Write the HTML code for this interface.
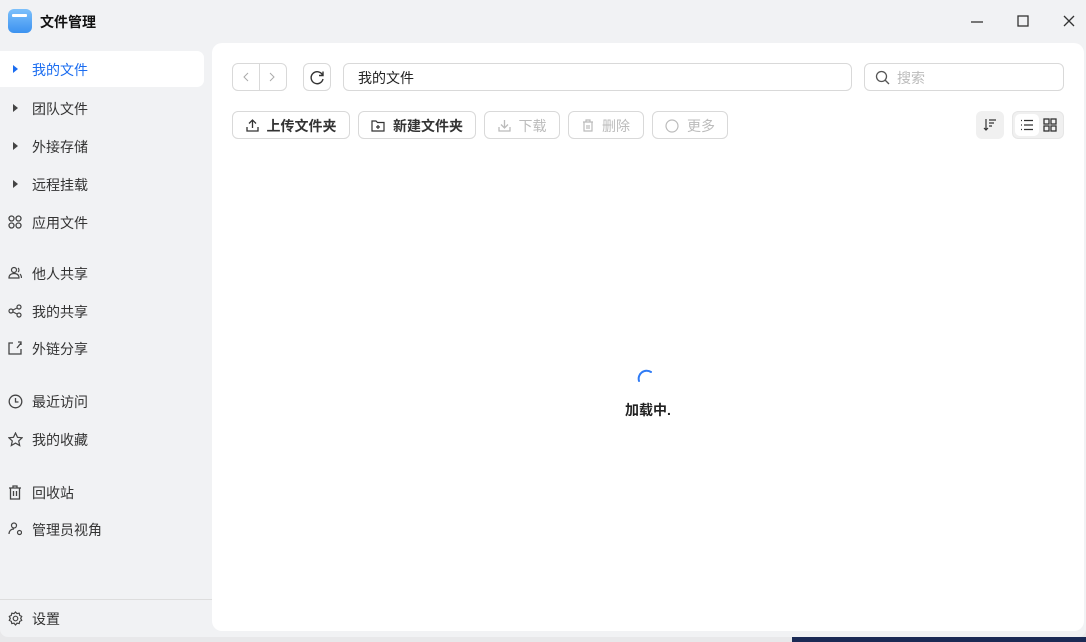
<!DOCTYPE html>
<html><head><meta charset="utf-8"><style>
*{box-sizing:border-box;margin:0;padding:0}
body{width:1086px;height:642px;overflow:hidden;background:#e8e8ea;font-family:"Liberation Sans","Noto Sans CJK SC",sans-serif;position:relative}
.win{position:absolute;left:0;top:0;width:1086px;height:637px;background:#f1f2f4;border-radius:0 0 8px 8px}
.title{position:absolute;left:40px;top:12px;font-size:14px;font-weight:bold;color:#111}
.logo{position:absolute;left:8px;top:9px;width:24px;height:24px;border-radius:6px;background:linear-gradient(#7cc0fb,#3c92f0)}
.logo:after{content:"";position:absolute;left:4px;top:5px;width:15px;height:3px;background:#fff;border-radius:1px}
.wc{position:absolute;top:12px;font-size:14px;color:#333}
.item{position:absolute;left:0;width:204px;height:36px;font-size:14px;color:#333;display:flex;align-items:center;padding-left:32px;padding-top:2px}
.item.act{background:#fff;border-radius:0 7px 7px 0;color:#1a6cf0}
.item svg{position:absolute;left:8px;top:11px}
.tri{position:absolute;left:13px;top:14px;width:0;height:0;border-left:5px solid #444;border-top:4px solid transparent;border-bottom:4px solid transparent}
.main{position:absolute;left:212px;top:43px;width:872px;height:588px;background:#fff;border-radius:10px}
.bx{position:absolute;border:1px solid #d9d9d9;border-radius:6px;background:#fff}
.btn{position:absolute;top:68px;height:28px;border:1px solid #d9d9d9;border-radius:6px;font-size:14px;font-weight:bold;color:#333;display:flex;align-items:center;justify-content:center;gap:8px;padding-top:1px}
.btn.dis{color:#bbb;font-weight:normal}
</style></head><body>
<div class="win">
<div class="logo"></div>
<div class="title">文件管理</div>
<svg class="wc" style="left:970px;top:15px" width="14" height="14"><path d="M1 7h12" stroke="#333" stroke-width="1.3"/></svg>
<svg class="wc" style="left:1017px;top:15px" width="12" height="12"><rect x="1" y="1" width="10" height="10" fill="none" stroke="#333" stroke-width="1.3"/></svg>
<svg class="wc" style="left:1063px;top:15px" width="12" height="12"><path d="M1 1l10 10M11 1L1 11" stroke="#333" stroke-width="1.3"/></svg>

<div class="item act" style="top:51px"><span class="tri" style="border-left-color:#1a6cf0"></span>我的文件</div>
<div class="item" style="top:90px"><span class="tri"></span>团队文件</div>
<div class="item" style="top:128px"><span class="tri"></span>外接存储</div>
<div class="item" style="top:166px"><span class="tri"></span>远程挂载</div>
<div class="item" style="top:204px"><svg width="14" height="14" fill="none" stroke="#444" stroke-width="1.3"><circle cx="3.5" cy="3.5" r="2.5"/><circle cx="10.5" cy="3.5" r="2.5"/><circle cx="3.5" cy="10.5" r="2.5"/><circle cx="10.5" cy="10.5" r="2.5"/></svg>应用文件</div>
<div class="item" style="top:255px"><svg width="14" height="14" fill="none" stroke="#444" stroke-width="1.2"><circle cx="6" cy="4" r="2.5"/><path d="M1 12c0-3 2-4.5 5-4.5s5 1.5 5 4.5zM10 2a2.5 2.5 0 010 4M12 8c1 1 1.5 2 1.5 4"/></svg>他人共享</div>
<div class="item" style="top:293px"><svg width="14" height="14" fill="none" stroke="#444" stroke-width="1.2"><circle cx="3" cy="7" r="2"/><circle cx="11" cy="3" r="2"/><circle cx="11" cy="11" r="2"/><path d="M5 6l4-2M5 8l4 2"/></svg>我的共享</div>
<div class="item" style="top:330px"><svg width="14" height="14" fill="none" stroke="#444" stroke-width="1.3"><path d="M5 2H1v11h12V8M9 7l4-5M10 1h3v3"/></svg>外链分享</div>
<div class="item" style="top:383px"><svg width="15" height="15" fill="none" stroke="#444" stroke-width="1.3"><circle cx="7.5" cy="7.5" r="6.3"/><path d="M7.5 4v4h3"/></svg>最近访问</div>
<div class="item" style="top:421px"><svg width="15" height="15" fill="none" stroke="#444" stroke-width="1.2"><path d="M7.5 1l2 4.3 4.6.5-3.4 3.1 1 4.6-4.2-2.4-4.2 2.4 1-4.6L.9 5.8l4.6-.5z"/></svg>我的收藏</div>
<div class="item" style="top:474px"><svg width="14" height="15" fill="none" stroke="#444" stroke-width="1.3"><path d="M1 3h12M5 3V1h4v2M2.5 3v11h9V3M5.5 6v5M8.5 6v5"/></svg>回收站</div>
<div class="item" style="top:511px"><svg width="14" height="14" fill="none" stroke="#444" stroke-width="1.2"><circle cx="6" cy="3.5" r="2.5"/><path d="M1 12c0-3 2-5 5-5M9.5 10.5a2 2 0 104 0 2 2 0 10-4 0"/></svg>管理员视角</div>
<div style="position:absolute;left:0;top:599px;width:212px;height:1px;background:#ddd"></div>
<div class="item" style="top:600px"><svg width="15" height="15" fill="none" stroke="#444" stroke-width="1.2"><circle cx="7.5" cy="7.5" r="2.3"/><path d="M7.5 1l1.5 1.6 2.2-.4.5 2.2 2 1-1 2 1 2-2 1-.5 2.2-2.2-.4L7.5 14 6 12.2l-2.2.4-.5-2.2-2-1 1-2-1-2 2-1 .5-2.2 2.2.4z"/></svg>设置</div>

<div class="main">
<div class="bx" style="left:20px;top:20px;width:55px;height:28px"><div style="position:absolute;left:26px;top:0;width:1px;height:26px;background:#d9d9d9"></div>
<svg style="position:absolute;left:9px;top:8px" width="8" height="10" fill="none" stroke="#aaa"><path d="M6 1L2 5l4 4"/></svg>
<svg style="position:absolute;left:35px;top:8px" width="8" height="10" fill="none" stroke="#aaa"><path d="M2 1l4 4-4 4"/></svg></div>
<div class="bx" style="left:91px;top:20px;width:28px;height:28px"><svg style="position:absolute;left:6px;top:6px" width="15" height="15" fill="none" stroke="#333" stroke-width="1.4"><path d="M12.5 5A6 6 0 1013 9"/><path d="M13 1.5V5.5H9"/></svg></div>
<div class="bx" style="left:131px;top:20px;width:509px;height:28px;font-size:14px;color:#222;padding:4px 14px">我的文件</div>
<div class="bx" style="left:652px;top:20px;width:200px;height:28px;font-size:14px;color:#bbb;padding:4px 0 0 32px"><svg style="position:absolute;left:10px;top:6px" width="15" height="15" fill="none" stroke="#555" stroke-width="1.3"><circle cx="6.5" cy="6.5" r="5"/><path d="M10 10l4 4"/></svg>搜索</div>
<div class="btn" style="left:20px;width:118px"><svg width="13" height="13" fill="none" stroke="#333" stroke-width="1.3"><path d="M6.5 9V1M3 4.5l3.5-3.5 3.5 3.5M1 8v4h11V8"/></svg>上传文件夹</div>
<div class="btn" style="left:146px;width:118px"><svg width="14" height="12" fill="none" stroke="#333" stroke-width="1.2"><path d="M1 1h4l1.5 1.5H13V11H1zM7 5v4M5 7h4"/></svg>新建文件夹</div>
<div class="btn dis" style="left:272px;width:76px"><svg width="13" height="13" fill="none" stroke="#bbb" stroke-width="1.3"><path d="M6.5 1v8M3 5.5l3.5 3.5 3.5-3.5M1 8v4h11V8"/></svg>下载</div>
<div class="btn dis" style="left:356px;width:76px"><svg width="12" height="13" fill="none" stroke="#bbb" stroke-width="1.2"><path d="M1 3h10M4 3V1h4v2M2 3v9h8V3M5 6v4M7 6v4"/></svg>删除</div>
<div class="btn dis" style="left:440px;width:76px"><svg width="14" height="14" fill="none" stroke="#bbb" stroke-width="1.2"><circle cx="7" cy="7" r="6"/></svg>更多</div>
<div style="position:absolute;left:764px;top:68px;width:28px;height:28px;background:#f0f0f0;border-radius:6px"><svg style="position:absolute;left:7px;top:7px" width="14" height="14" fill="none" stroke="#333" stroke-width="1.2"><path d="M3 1v11M1 10l2 2 2-2M6 2h7M6 5h5M6 8h3"/></svg></div>
<div style="position:absolute;left:800px;top:68px;width:52px;height:28px;background:#f0f0f0;border-radius:6px;border:1px solid #e6e6e6"><div style="position:absolute;left:2px;top:2px;width:24px;height:22px;background:#fff;border-radius:5px"></div>
<svg style="position:absolute;left:7px;top:7px" width="14" height="12" fill="none" stroke="#333" stroke-width="1.3"><path d="M1 1.5h1M1 6h1M1 10.5h1M4 1.5h9M4 6h9M4 10.5h9"/></svg>
<svg style="position:absolute;left:30px;top:6px" width="14" height="14" fill="none" stroke="#333" stroke-width="1.3"><rect x="1" y="1" width="5" height="5"/><rect x="8" y="1" width="5" height="5"/><rect x="1" y="8" width="5" height="5"/><rect x="8" y="8" width="5" height="5"/></svg></div>
<svg style="position:absolute;left:424px;top:324px" width="22" height="22" fill="none"><path d="M3 14A8 8 0 0115 5" stroke="#2f7bf5" stroke-width="2" stroke-linecap="round"/></svg>
<div style="position:absolute;left:0;width:872px;top:357px;text-align:center;font-size:14px;font-weight:bold;color:#222">加载中.</div>
</div>
</div>
<div style="position:absolute;left:792px;top:637px;width:294px;height:5px;background:#1b2a55"></div>
</body></html>
